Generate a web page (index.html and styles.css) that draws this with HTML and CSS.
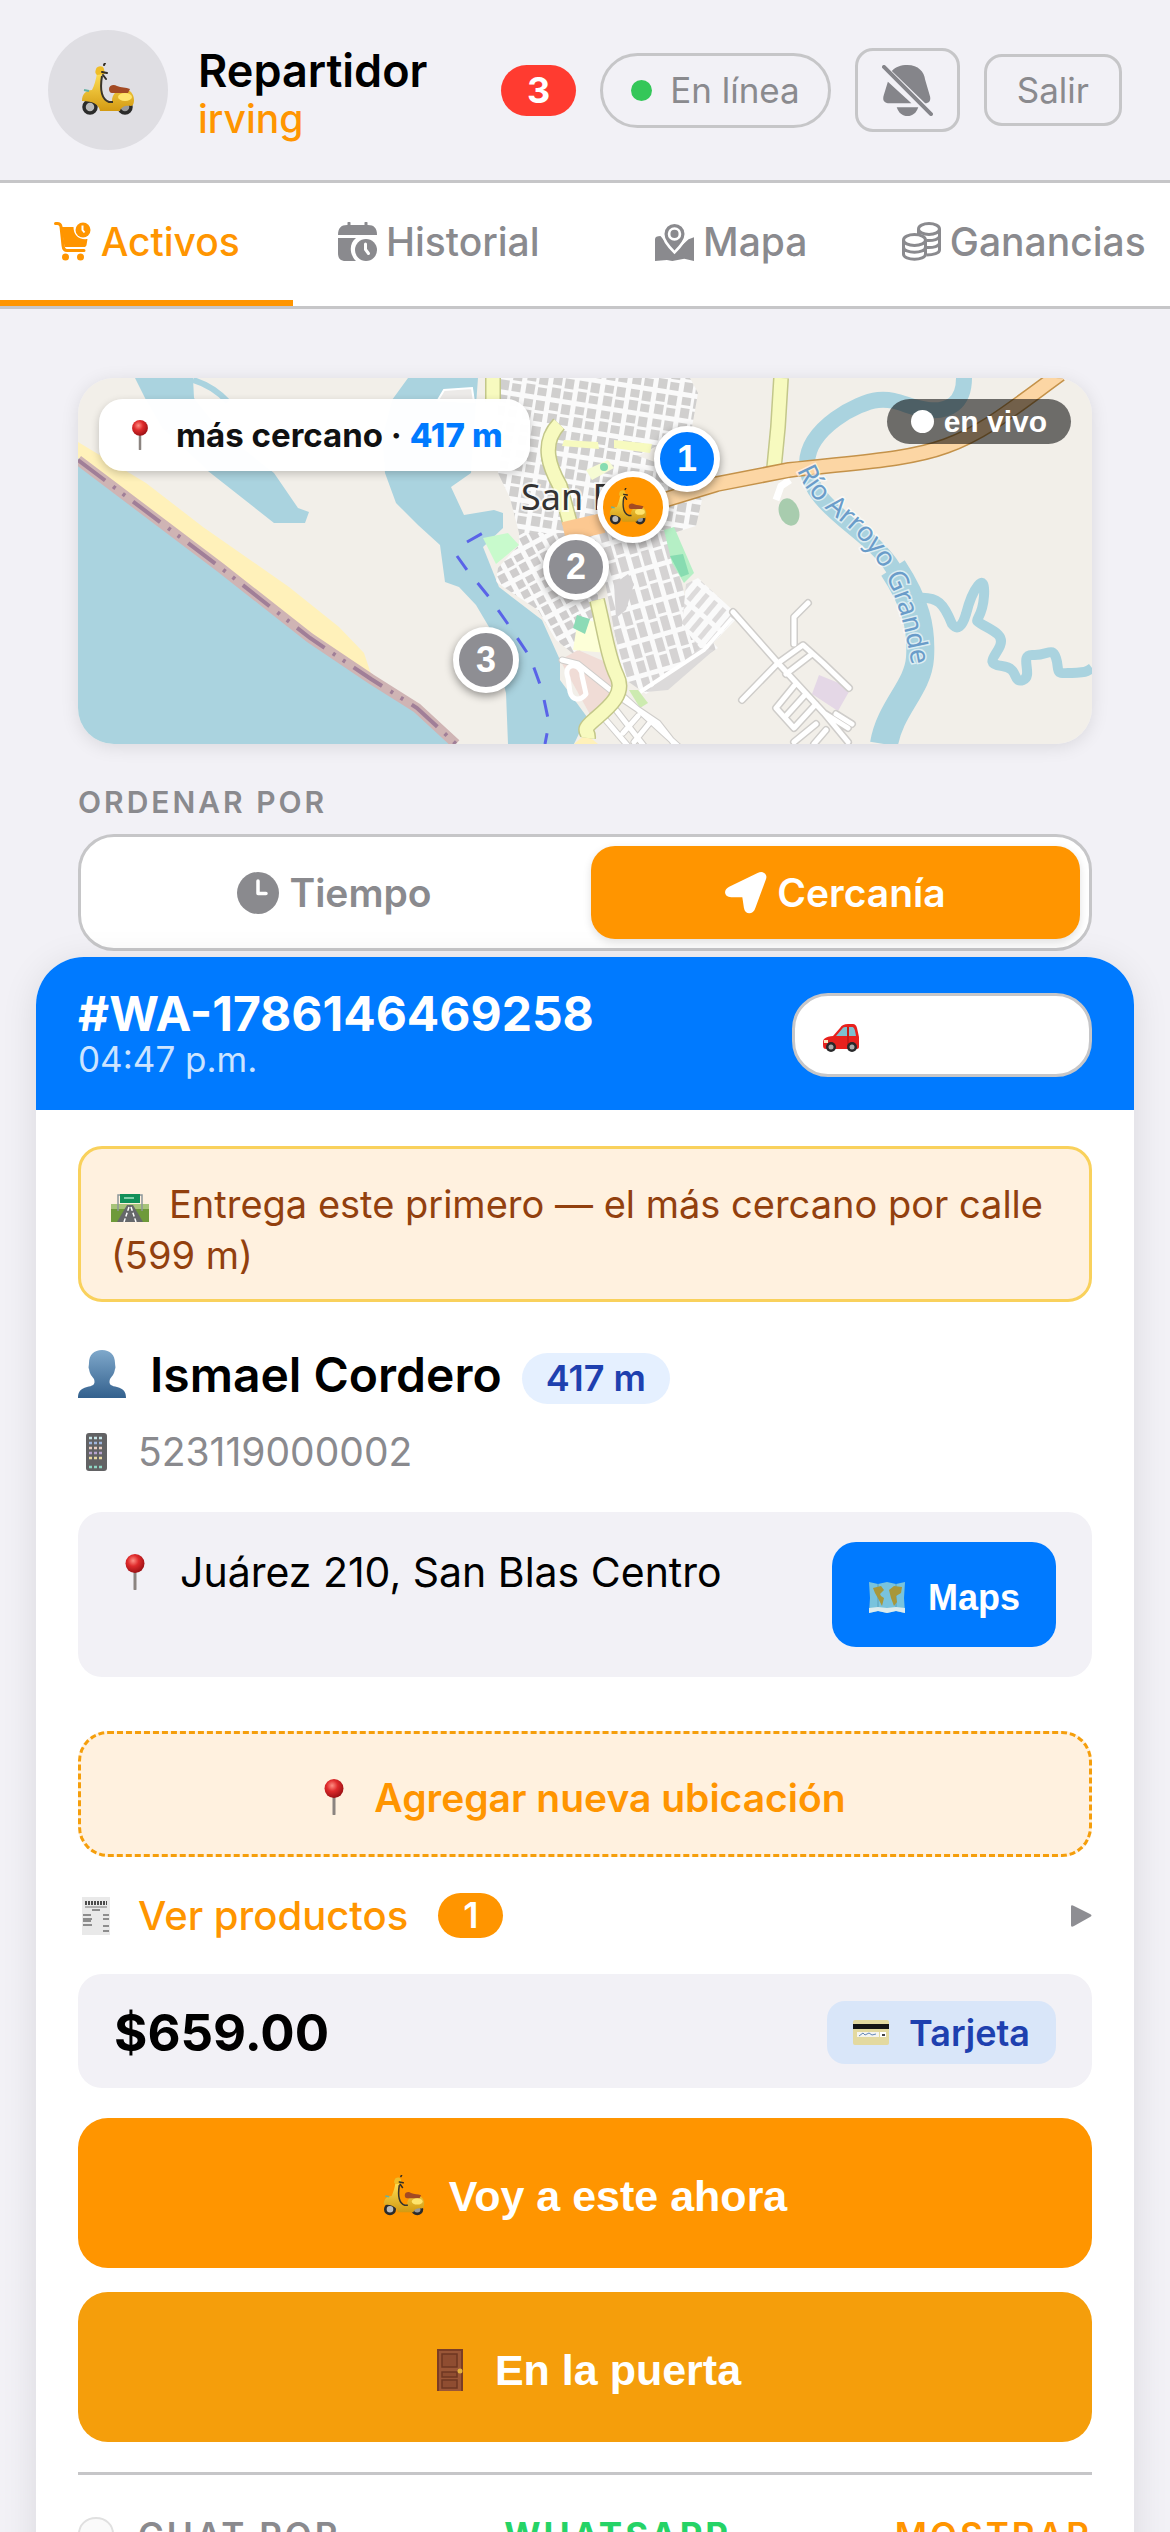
FILE: index.html
```
<!DOCTYPE html>
<html lang="es">
<head>
    <meta charset="UTF-8">
    <meta name="viewport" content="width=device-width, initial-scale=1.0">
    <title>Repartidor</title>
    <link rel="stylesheet" href="styles.css">
</head>
<body>
    <!-- shared icons -->
    <svg class="sprite" aria-hidden="true">
        <defs>
            <linearGradient id="gBody" x1="0" y1="0" x2="0" y2="1">
                <stop offset="0" stop-color="#ffdf55"/>
                <stop offset="1" stop-color="#d39a12"/>
            </linearGradient>
            <radialGradient id="gPin" cx=".4" cy=".35" r=".65">
                <stop offset="0" stop-color="#ff8f84"/>
                <stop offset=".45" stop-color="#df2b2c"/>
                <stop offset="1" stop-color="#9d1115"/>
            </radialGradient>
            <linearGradient id="gUser" x1="0" y1="0" x2="0" y2="1">
                <stop offset="0" stop-color="#7fa8cb"/>
                <stop offset="1" stop-color="#33608d"/>
            </linearGradient>
        </defs>
        <symbol id="scooter" viewBox="0 0 54 54">
            <circle cx="9" cy="44" r="6" fill="#bbb" stroke="#2b2b2b" stroke-width="3.500"/>
            <circle cx="44" cy="44" r="6" fill="#999" stroke="#2b2b2b" stroke-width="3.500"/>
            <path d="M1 38c0-7 4-11 10-11 2-4 4-10 5-17h5c-1 10 0 18 1 21 1 5 3 7 7 7h2c0-7 5-12 12-12 6 0 10 5 10 11 0 3-1 6-3 6-6-1-10 1-11 5H19c-1-6-6-10-18-10z" fill="url(#gBody)"/>
            <path d="M21 13c-2 12-1 23 7 26h4" fill="none" stroke="#39342c" stroke-width="2"/>
            <path d="M28 26c0-4 5-5 8-3 4 2 9 1 13 3l-2 4H31c-2 0-3-2-3-4z" fill="#a34a24"/>
            <path d="M15 6c1-3 7-4 8 0l1 5-8 1c-2-2-2-3-1-6z" fill="#f0bd28"/>
            <path d="M23 2l1-2m-3 9 5 1m-4 2 3 4" stroke="#332d24" stroke-width="2" stroke-linecap="round"/>
            <path d="M3 27l5 1" stroke="#62b1a5" stroke-width="2"/>
            <ellipse cx="44" cy="34" rx="7" ry="4" fill="#ffe46d"/>
        </symbol>
        <symbol id="pin" viewBox="0 0 20 36">
            <path d="M10 16v19" stroke="#8b8480" stroke-width="3" stroke-linecap="round"/>
            <circle cx="10" cy="9.5" r="9.5" fill="url(#gPin)"/>
        </symbol>
        <symbol id="cart" viewBox="0 0 36 39">
            <path d="M1 1.500h2c2 0 3 1 3.500 3l2 19c.3 3 2 5 4 5h17" fill="none" stroke="currentColor" stroke-width="3" stroke-linecap="round"/>
            <path d="M7 5h12c0 8 5 13 14 12l-1 6c-.4 1.500-1.200 2-2.500 2H10z" fill="currentColor"/>
            <circle cx="11" cy="35" r="3.500" fill="currentColor"/>
            <circle cx="26" cy="35" r="3.500" fill="currentColor"/>
            <circle cx="28.500" cy="8" r="7.500" fill="currentColor"/>
            <path d="M28 3.500v4.500l2 2.500" fill="none" stroke="#fff" stroke-width="2"/>
        </symbol>
        <symbol id="calendar" viewBox="0 0 39 39">
            <path d="M11 1v5M28 1v5" stroke="currentColor" stroke-width="3" stroke-linecap="round"/>
            <path d="M0 13c0-7 3-10 9-10h21c6 0 9 3 9 10zM0 16h18c-7 5-7 16 0 23H8c-6 0-8-3-8-8z" fill="currentColor"/>
            <circle cx="28" cy="28" r="11" fill="currentColor"/>
            <path d="M27.500 22v5.500l3 4" fill="none" stroke="#fff" stroke-width="3" stroke-linecap="round"/>
        </symbol>
        <symbol id="mappin" viewBox="0 0 36 36">
            <path d="M0 16c0-2 2-3 5-3l13 15 13-12 5-2v22l-9-2-11 2-5-1-11 1z" fill="currentColor"/>
            <path d="M18 28C11 21 7.500 16 7.500 11a10.500 10.500 0 0121 0c0 5-3.500 10-10.500 17z" fill="currentColor" stroke="#fff" stroke-width="2.500"/>
            <circle cx="18" cy="11" r="5" fill="none" stroke="#fff" stroke-width="2.500"/>
        </symbol>
        <symbol id="coins" viewBox="0 0 39 39">
            <g fill="none" stroke="currentColor" stroke-width="3">
                <ellipse cx="27" cy="7" rx="10.500" ry="5.500"/>
                <path d="M16.500 7v5M37.500 7v21c0 3-6 5-13 5M37.500 14c0 3-6 5-13 4.500M37.500 21c0 3-6 5-13 4.500"/>
                <ellipse cx="12.500" cy="18" rx="11" ry="5.500"/>
                <path d="M1.500 18v14c0 7 22 7 22 0V18M1.500 25c0 7 22 7 22 0"/>
            </g>
        </symbol>
        <symbol id="belloff" viewBox="0 0 52 52">
            <path d="M26 0c11 0 17 7 18 15l5 17c1 4-1 7-5 7L10 6c4-4 9-6 16-6zM6 17l24 22H8c-6 0-8-3-6-9zM15 43h22c-2 6-6 9-11 9s-9-3-11-9z" fill="currentColor"/>
            <path d="M2 2l48 48" stroke="currentColor" stroke-width="4" stroke-linecap="round"/>
        </symbol>
        <symbol id="clock" viewBox="0 0 42 42">
            <circle cx="21" cy="21" r="21" fill="currentColor"/>
            <path d="M21 9v12.500h8" fill="none" stroke="#fff" stroke-width="3.500" stroke-linecap="round" stroke-linejoin="round"/>
        </symbol>
        <symbol id="arrow" viewBox="0 0 40 40">
            <path d="M31 1c5-2.500 10 .5 8 6L29 34c-2 7-10 7-11 0l-1.500-10H6c-7 0-8-7-2-10z" fill="currentColor"/>
        </symbol>
    </svg>

    <header class="header">
        <div class="avatar"><svg><use href="#scooter"/></svg></div>
        <div class="who">
            <h1>Repartidor</h1>
            <p>irving</p>
        </div>
        <div class="actions">
            <span class="count">3</span>
            <button class="online"><i class="dot"></i>En línea</button>
            <button class="bell" aria-label="Notificaciones"><svg><use href="#belloff"/></svg></button>
            <button class="exit">Salir</button>
        </div>
    </header>

    <nav class="tabs">
        <a href="#" class="tab active"><svg><use href="#cart"/></svg>Activos</a>
        <a href="#" class="tab"><svg><use href="#calendar"/></svg>Historial</a>
        <a href="#" class="tab"><svg><use href="#mappin"/></svg>Mapa</a>
        <a href="#" class="tab"><svg><use href="#coins"/></svg>Ganancias</a>
    </nav>

    <section class="top">
        <div class="map">
            <svg class="tiles" viewBox="0 0 1014 366" preserveAspectRatio="xMidYMid slice">
                <defs>
                    <pattern id="blocksN" width="26" height="26" patternUnits="userSpaceOnUse" patternTransform="rotate(9)">
                        <rect width="26" height="26" fill="#fafafa"/>
                        <path d="M2 2h9v8H2zM14 2h9v10h-9zM2 13h9v10H2zM14 15h9v8h-9z" fill="#d0cfce"/>
                    </pattern>
                    <pattern id="blocksS" width="24" height="34" patternUnits="userSpaceOnUse" patternTransform="rotate(-16)">
                        <rect width="24" height="34" fill="#fafafa"/>
                        <path d="M2 2h8v14H2zM13 2h8v11h-8zM2 19h8v12H2zM13 16h8v15h-8z" fill="#d5d3d3"/>
                    </pattern>
                    <pattern id="blocksW" width="24" height="24" patternUnits="userSpaceOnUse" patternTransform="rotate(-28)">
                        <rect width="24" height="24" fill="#fafafa"/>
                        <path d="M2 2h8v8H2zM13 2h8v7h-8zM2 13h8v8H2zM13 12h8v9h-8z" fill="#cfcdcd"/>
                    </pattern>
                    <pattern id="blocksE" width="11" height="22" patternUnits="userSpaceOnUse" patternTransform="rotate(40)">
                        <rect width="11" height="22" fill="#fafafa"/>
                        <rect x="3" y="3" width="5" height="17" fill="#dddbdb"/>
                    </pattern>
                </defs>
                <rect width="1014" height="366" fill="#f2efe9"/>
                <!-- sea and beach -->
                <path d="M0 80 143 190 232 260 293 301 339 330 378 366H0z" fill="#aad3df"/>
                <path d="M0 64 68 105 125 149 211 209 261 249 286 275 293 296 232 258 143 188 0 80z" fill="#fff1ba"/>
                <path d="M0 82 143 190 232 260 293 301 339 330 378 366" fill="none" stroke="#cfb4b4" stroke-width="10"/>
                <path d="M0 82 143 190 232 260 293 301 339 330 378 366" fill="none" stroke="#a07f98" stroke-width="4" stroke-dasharray="34 10 3 9 3 10"/>
                <!-- lagoon and estuary -->
                <path d="M57 0 68 22 84 50 130 93 196 145H227L231 134 220 130 196 95 140 50 116 20 115 0z" fill="#aad3df"/>
                <path d="M115 2Q135 8 150 24" fill="none" stroke="#aad3df" stroke-width="6"/>
                <path d="M330 0 314 22 304 60 307 95 318 125 340 147 362 167 367 204 381 209 398 227 411 249 428 315 430 366H496L509 339 482 302V282L464 242 421 209 405 169 425 150V135L416 132 386 137 373 109 393 95 400 0z" fill="#aad3df"/>
                <path d="M360 22 366 12 394 10 396 24z" fill="#eceae8" stroke="#fff" stroke-width="2"/>
                <!-- town -->
                <path d="M420 0H612L620 15 614 49 560 78 600 92 624 122 618 148 595 155H441L432 120 420 95z" fill="url(#blocksN)"/>
                <path d="M441 155H520V250L498 278 478 262 460 232 418 204 420 190 441 167z" fill="url(#blocksW)"/>
                <path d="M517 150 586 152 604 206 612 240 640 270 568 316 545 300z" fill="url(#blocksS)"/>
                <path d="M608 206 620 200 661 238 626 275 604 248z" fill="url(#blocksE)"/>
                <path d="M568 314 622 270 636 272 590 312z" fill="#dcdada"/>
                <path d="M562 314 626 272 654 240" fill="none" stroke="#fff" stroke-width="4"/>
                <path d="M482 282 500 272 530 285 540 315 515 342z" fill="#f0dcd6"/>
                <path d="M500 240 522 245 530 275 495 272z" fill="#fdffd8"/>
                <path d="M499 237 512 241 507 256 495 250z" fill="#8cdbb6"/>
                <path d="M405 160 430 155 441 167 418 186z" fill="#c8facc"/>
                <path d="M586 152 596 149 616 195 606 205 594 185z" fill="#b5efc5"/>
                <path d="M592 178 605 176 611 196 603 199z" fill="#87dcb1"/>
                <path d="M536 62 574 66 572 75 536 70zM486 62 520 64 521 71 484 68z" fill="#f7fabf"/>
                <path d="M508 92 530 82 536 90 514 102z" fill="#f6fbd4"/>
                <circle cx="526" cy="89" r="4" fill="#87dcb1"/>
                <path d="M536 206 550 196 556 206 548 232 538 240z" fill="#d5d3d4"/>
                <ellipse cx="711" cy="134" rx="10" ry="14" fill="#a8ccae" transform="rotate(-18 711 134)"/>
                <path d="M698 122 703 108 712 102" fill="none" stroke="#fff" stroke-width="7"/>
                <path d="M741 297 773 310 760 333 734 316z" fill="#e4d7e6"/>
                <path d="M551 312 560 312 570 325 562 330z" fill="#cdebb0"/>
                <path d="M496 366 508 356 520 366z" fill="#fff1ba"/>
                <!-- outskirts -->
                <g fill="none" stroke-linejoin="round" stroke-linecap="round">
                    <path d="M655 234 700 285 746 335 770 364M700 285 664 322M700 285 725 267 745 285 771 310M716 266V239L730 225M708 296 734 276M716 308 698 330 716 350 738 326M726 318 708 338M738 346 716 364M748 352 736 366M746 335 770 350M758 336 774 346" stroke="#cfcdca" stroke-width="8"/>
                    <path d="M655 234 700 285 746 335 770 364M700 285 664 322M700 285 725 267 745 285 771 310M716 266V239L730 225M708 296 734 276M716 308 698 330 716 350 738 326M726 318 708 338M738 346 716 364M748 352 736 366M746 335 770 350M758 336 774 346" stroke="#fff" stroke-width="5"/>
                    <path d="M484 282 500 286 540 318 580 345 598 368M545 318 600 368M526 340 550 368M538 332 566 368M545 355 560 338M556 364 574 342" stroke="#cfcdca" stroke-width="7"/>
                    <path d="M484 282 500 286 540 318 580 345 598 368M545 318 600 368M526 340 550 368M538 332 566 368M545 355 560 338M556 364 574 342" stroke="#fff" stroke-width="5"/>
                    <path d="M490 300C484 284 504 284 504 298L508 316C502 324 494 322 492 314z" stroke="#fff" stroke-width="5"/>
                </g>
                <!-- rivers -->
                <g fill="none" stroke="#aad3df" stroke-linejoin="round">
                    <path d="M886 0C886 26 870 34 850 32S820 20 800 22 730 50 729 85C730 130 790 150 815 190S846 250 846 275" stroke-width="16"/>
                    <path d="M815 190C838 225 844 250 842 280S812 330 806 366" stroke-width="28"/>
                    <path d="M839 220C860 218 866 226 874 246Q882 256 888 236C894 212 908 190 906 218S892 240 905 247 926 258 922 268 906 286 924 288 934 306 945 302 940 276 955 277 974 268 978 280 976 296 990 295 1006 296 1014 290" stroke-width="10"/>
                </g>
                <!-- main roads -->
                <g fill="none">
                    <path d="M415 0V24M481 46C462 66 472 90 482 108L492 145M519 222C526 250 530 280 539 298S530 330 516 342 511 352 510 360M703 0 700 49 696 90" stroke="#c3c78a" stroke-width="16"/>
                    <path d="M415 0V24M481 46C462 66 472 90 482 108L492 145M519 222C526 250 530 280 539 298S530 330 516 342 511 352 510 360M703 0 700 49 696 90" stroke="#f7fabf" stroke-width="13"/>
                    <path d="M486 154 525 145" stroke="#fcc891" stroke-width="20"/>
                    <path d="M560 130 639 106 711 92C780 84 830 82 868 68S930 34 982-4" stroke="#c4924a" stroke-width="16"/>
                    <path d="M560 130 639 106 711 92C780 84 830 82 868 68S930 34 982-4" stroke="#fcd6a4" stroke-width="13"/>
                </g>
                <!-- ferry -->
                <path d="M389 164 405 155M379 178 389 192 411 219 432 249 452 279 464 312 471 345 467 366" fill="none" stroke="#5a63e8" stroke-width="3" stroke-dasharray="17 17"/>
                <path id="rio" d="M719 92C732 128 764 138 788 168S826 230 838 315" fill="none"/>
                <text class="town" x="443" y="132">San Blas</text>
                <text class="river"><textPath href="#rio">Río Arroyo Grande</textPath></text>
            </svg>
            <div class="near"><svg><use href="#pin"/></svg><span>más cercano · <b>417 m</b></span></div>
            <div class="live"><i></i>en vivo</div>
            <span class="stop first" style="left: 60.06%; top: 22.13%">1</span>
            <span class="stop" style="left: 49.11%; top: 51.64%">2</span>
            <span class="stop" style="left: 40.24%; top: 77.05%">3</span>
            <span class="stop me" style="left: 54.73%; top: 35.25%"><svg><use href="#scooter"/></svg></span>
        </div>

        <h2 class="label">ORDENAR POR</h2>
        <div class="sort">
            <button><svg><use href="#clock"/></svg>Tiempo</button>
            <button class="on"><svg><use href="#arrow"/></svg>Cercanía</button>
        </div>
    </section>

    <article class="card">
        <div class="card-head">
            <div>
                <h2>#WA-1786146469258</h2>
                <time>04:47 p.m.</time>
            </div>
            <span class="status">
                <svg viewBox="0 0 36 28">
                    <path d="M1 15c2-2 6-3 9-3l7-8c2-3 4-4 8-4h5c2 0 3 1 4 4l2 9v10c0 1-1 2-2 2H3c-2 0-3-1-3-4 0-3 0-5 1-6z" fill="#e8211d"/>
                    <path d="M13 12l6-7c1-2 3-2 5-2v9zM26 3h3c2 0 3 2 4 9h-7z" fill="#7ec0cf"/>
                    <path d="M25 3v19" stroke="#a81613" stroke-width="1"/>
                    <circle cx="8" cy="23" r="5" fill="#28282a"/><circle cx="8" cy="23" r="2.500" fill="#aaa"/>
                    <circle cx="29" cy="23" r="5" fill="#28282a"/><circle cx="29" cy="23" r="2.500" fill="#aaa"/>
                    <path d="M1 16h4v3H1z" fill="#ffe7bd"/>
                </svg>
            </span>
        </div>
        <div class="card-body">
            <p class="tip"><svg viewBox="0 0 38 28">
                    <path d="M0 10h38v18H0z" fill="#6e9a3a"/>
                    <path d="M0 10h38v5H0z" fill="#a8c47a"/>
                    <path d="M16 11h6l10 17H6z" fill="#66686b"/>
                    <path d="M18 13l-5 15M20 13l5 15" stroke="#fff" stroke-width="1.500" stroke-dasharray="4 2"/>
                    <path d="M7 17V1h24v16" fill="none" stroke="#8d979b" stroke-width="1.500"/>
                    <path d="M9 0h20v9H9z" fill="#129059"/>
                    <path d="M13 4h10" stroke="#7fd0a9" stroke-width="2"/>
                </svg>Entrega este primero — el más cercano por calle (599 m)</p>

            <div class="client">
                <svg viewBox="0 0 48 48">
                    <path d="M24 0c8 0 13 5 13 13 0 2 1 5 0 6-1 6-3 7-5 10-2 6 2 7 7 8 7 2 9 5 9 11H0c0-6 2-9 9-11 5-1 9-2 7-8-2-3-4-4-5-10-1-1 0-4 0-6C11 5 16 0 24 0z" fill="url(#gUser)"/>
                </svg>
                <h3>Ismael Cordero</h3>
                <span class="dist">417 m</span>
            </div>

            <p class="phone"><svg viewBox="0 0 36 38">
                    <rect x="8" y="0" width="21" height="38" rx="3" fill="#626264"/>
                    <g stroke-width="2.500" stroke-dasharray="3 2" fill="none">
                        <path d="M11 5h15" stroke="#c8e6e9"/><path d="M11 10h15" stroke="#9fb6dd"/>
                        <path d="M11 15h15" stroke="#e9cfc3"/><path d="M11 20h15" stroke="#b7a4cf"/>
                        <path d="M11 25h15" stroke="#e9d9a2"/><path d="M11 34h15" stroke="#8ed6c3"/>
                    </g>
                </svg>523119000002</p>

            <div class="address">
                <p><svg><use href="#pin"/></svg>Juárez 210, San Blas Centro</p>
                <button class="maps"><svg viewBox="0 0 38 34">
                        <path d="M1 1l9 2 9-2 9 2 9-2-1 16 1 15-9-2-9 2-9-2-9 2 1-15z" fill="#79c3dd"/>
                        <path d="M10 3v27M28 3v27" stroke="#5aa0bd" stroke-width="1"/>
                        <path d="M5 7l8-2 3 4-4 4 1 2 3 2-2 8-3-6-4-7zM21 9l5-4 8 1-1 6-5 3 1 6-3 4-3-8z" fill="#a8973a"/>
                        <path d="M1 27l9-1 9 1 9-1 9 1v5l-9-2-9 2-9-2-9 2z" fill="#dcebee"/>
                    </svg>Maps</button>
            </div>

            <button class="add"><svg><use href="#pin"/></svg>Agregar nueva ubicación</button>

            <button class="products">
                <svg viewBox="0 0 36 38">
                    <path d="M4 0h28v38H4z" fill="#e9e9e9"/>
                    <path d="M7 6h22" stroke="#4b4b4b" stroke-width="4" stroke-dasharray="2 1"/>
                    <path d="M7 10h22" stroke="#777" stroke-width="1"/>
                    <path d="M14 13h8M5 18h8M25 18h6M5 22h9M25 22h6M5 24h8M5 28h9M25 29h6M25 34h6" stroke="#6f6f6f" stroke-width="1.500"/>
                </svg>
                Ver productos
                <span class="qty">1</span>
                <svg class="tri" viewBox="0 0 22 22"><path d="M1 2c0-2 1-2 3-1l16 8c2 1 2 2 0 3L4 21c-2 1-3 1-3-1z" fill="#8e8e93"/></svg>
            </button>

            <div class="total">
                <strong>$659.00</strong>
                <span class="pay"><svg viewBox="0 0 36 25">
                        <rect width="36" height="25" rx="2" fill="#e3d9a0"/>
                        <path d="M0 4h36v5H0z" fill="#151515"/>
                        <path d="M4 12h22v5H4z" fill="#f4f4f0"/>
                        <path d="M6 16l4-3 2 2 4-2 3 2 4-1" stroke="#6487b8" stroke-width="1" fill="none"/>
                        <path d="M27 12h6v5h-6z" fill="#fff"/>
                        <path d="M29 15h3" stroke="#444" stroke-width="2"/>
                    </svg>Tarjeta</span>
            </div>

            <button class="go"><svg><use href="#scooter"/></svg>Voy a este ahora</button>
            <button class="go door"><svg viewBox="0 0 42 42">
                    <path d="M8 0h26v42H8z" fill="#7a3d26"/>
                    <path d="M10 2h22v40H10z" fill="#9a5637"/>
                    <path d="M13 5h15v13H13zM13 23h15v5H13zM13 31h15v8H13z" fill="#8f4d31" stroke="#6f3722" stroke-width="1.500"/>
                    <circle cx="31" cy="22" r="2.500" fill="#e3b23c"/>
                </svg>En la puerta</button>

            <div class="chat">
                <span class="chat-label"><svg viewBox="0 0 36 36"><path d="M18 1c10 0 17 7 17 16s-7 16-17 16c-3 0-6-1-8-2l-6 4 1-8C2 24 1 21 1 17 1 8 8 1 18 1z" fill="#fafafa" stroke="#e0e0e0" stroke-width="2"/></svg>CHAT POR</span>
                <a href="#" class="wa">WHATSAPP</a>
                <button class="show">MOSTRAR</button>
            </div>
        </div>
    </article>
</body>
</html>
```
FILE: styles.css
```
*{
    box-sizing: border-box;
}
body{
    margin: 0;
    background: #f2f1f6;
    color: #000;
    font-family: Inter, "Liberation Sans", sans-serif;
    font-size: 39px;
}
h1, h2, h3, p{
    margin: 0;
}
button{
    margin: 0;
    padding: 0;
    border: none;
    background: none;
    color: inherit;
    font: inherit;
}
a{
    text-decoration: none;
    color: inherit;
}
svg{
    display: block;
    flex: none;
}
.sprite{
    position: absolute;
    width: 0;
    height: 0;
}

/* header */
.header{
    display: flex;
    align-items: center;
    padding: 30px 48px;
    border-bottom: 3px solid #c6c6c8;
}
.avatar{
    width: 120px;
    height: 120px;
    border-radius: 50%;
    background: #dfdee3;
    display: flex;
    align-items: center;
    justify-content: center;
}
.avatar svg{
    width: 54px;
    height: 54px;
}
.who{
    margin-left: 30px;
    padding-top: 9px;
}
.who h1{
    font-size: 45px;
    font-weight: 600;
    line-height: 48px;
}
.who p{
    font-size: 39px;
    font-weight: 500;
    line-height: 48px;
    color: #ff9500;
}
.actions{
    margin-left: auto;
    display: flex;
    align-items: center;
    gap: 24px;
    color: #8a8a8e;
    font-size: 35px;
}
.count{
    padding: 0 26px;
    border-radius: 26px;
    background: #ff3b30;
    color: #fff;
    font-size: 36px;
    font-weight: 700;
    line-height: 51px;
}
.online, .bell, .exit{
    display: flex;
    align-items: center;
    justify-content: center;
    border: 3px solid #c6c6c8;
    border-radius: 18px;
    height: 72px;
    padding: 0 30px;
}
.online{
    height: 75px;
    padding: 0 28px;
    border-radius: 38px;
    gap: 18px;
}
.dot{
    width: 21px;
    height: 21px;
    border-radius: 50%;
    background: #34c759;
}
.bell{
    height: 84px;
    padding: 0 24px;
    color: #85858a;
}
.bell svg{
    width: 51px;
    height: 51px;
}

/* tabs */
.tabs{
    display: grid;
    grid-template-columns: repeat(4, 1fr);
    background: #fff;
    border-bottom: 3px solid #c6c6c8;
}
.tab{
    display: flex;
    align-items: center;
    justify-content: center;
    gap: 9px;
    height: 123px;
    border-bottom: 6px solid transparent;
    color: #8a8a8e;
    font-size: 39px;
    font-weight: 500;
}
.tab svg{
    width: 39px;
    height: 39px;
}
.tab.active{
    color: #ff9500;
    border-bottom-color: #ff9500;
}

/* map */
.top{
    padding: 69px 78px 6px;
}
.map{
    position: relative;
    height: 366px;
    border-radius: 36px;
    overflow: hidden;
    box-shadow: 0 3px 18px rgba(0,0,0,0.1);
    font-family: "Liberation Sans", sans-serif;
}
.tiles{
    width: 100%;
    height: 100%;
}
.town{
    font: 36px "Noto Sans", sans-serif;
    fill: #333;
    stroke: rgba(255,255,255,0.7);
    stroke-width: 4px;
    paint-order: stroke;
}
.river{
    font: 27px "Noto Sans", sans-serif;
    fill: #6a9cc9;
    stroke: rgba(255,255,255,0.6);
    stroke-width: 3px;
    paint-order: stroke;
}
.near{
    position: absolute;
    left: 21px;
    top: 21px;
    display: flex;
    align-items: center;
    gap: 27px;
    height: 72px;
    padding: 0 27px 0 32px;
    border-radius: 24px;
    background: rgba(255,255,255,0.98);
    box-shadow: 0 3px 9px rgba(0,0,0,0.2);
    color: #111;
    font-family: Inter, sans-serif;
    font-size: 33px;
    font-weight: 700;
}
.near svg{
    width: 18px;
    height: 30px;
}
.near b{
    color: #007aff;
    font-weight: 800;
}
.live{
    position: absolute;
    right: 21px;
    top: 21px;
    display: flex;
    align-items: center;
    gap: 10px;
    height: 45px;
    padding: 0 24px;
    border-radius: 23px;
    background: rgba(0,0,0,0.55);
    color: #fff;
    font-size: 30px;
    font-weight: 700;
}
.live i{
    width: 23px;
    height: 23px;
    border-radius: 50%;
    background: #fff;
}
.stop{
    position: absolute;
    width: 66px;
    height: 66px;
    margin: -33px 0 0 -33px;
    border: 6px solid #fff;
    border-radius: 50%;
    background: #8e8e93;
    box-shadow: 0 3px 9px rgba(0,0,0,0.4);
    color: #fff;
    font-size: 36px;
    font-weight: 700;
    line-height: 54px;
    text-align: center;
}
.stop.first{
    background: #007aff;
}
.stop.me{
    width: 72px;
    height: 72px;
    margin: -36px 0 0 -36px;
    background: #ff9500;
    display: flex;
    align-items: center;
    padding-left: 6px;
}
.stop.me svg{
    width: 38px;
    height: 38px;
}

/* sort */
.label{
    margin: 40px 0 14px;
    color: #8a8a8e;
    font-size: 30px;
    font-weight: 600;
    line-height: 36px;
    letter-spacing: 3px;
}
.sort{
    display: grid;
    grid-template-columns: 1fr 1fr;
    gap: 12px;
    padding: 9px;
    border: 3px solid #c6c6c8;
    border-radius: 36px;
    background: #fff;
}
.sort button{
    display: flex;
    align-items: center;
    justify-content: center;
    gap: 10px;
    height: 93px;
    border-radius: 24px;
    color: #8a8a8e;
    font-size: 39px;
    font-weight: 600;
}
.sort .on{
    background: #ff9500;
    color: #fff;
    box-shadow: 0 3px 9px rgba(0,0,0,0.12);
}
.sort svg{
    width: 42px;
    height: 42px;
}

/* order card */
.card{
    margin: 0 36px;
    border-radius: 48px;
    overflow: hidden;
    background: #fff;
    box-shadow: 0 6px 36px rgba(0,0,0,0.1);
}
.card-head{
    display: flex;
    align-items: center;
    justify-content: space-between;
    padding: 33px 42px 30px;
    background: #007aff;
    color: #fff;
}
.card-head h2{
    font-size: 48px;
    font-weight: 700;
    line-height: 48px;
}
.card-head time{
    display: block;
    font-size: 35px;
    line-height: 42px;
    color: #cce4ff;
}
.status{
    display: flex;
    align-items: center;
    width: 300px;
    height: 84px;
    padding: 6px 28px 0;
    border: 3px solid #c6c6c8;
    border-radius: 36px;
    background: #fff;
}
.status svg{
    width: 36px;
    height: 28px;
}
.card-body{
    padding: 36px 42px;
}
.tip{
    padding: 30px 30px 18px;
    border: 3px solid #f9d15c;
    border-radius: 24px;
    background: #fff1df;
    color: #92400e;
    font-size: 38px;
    line-height: 51px;
}
.tip svg{
    display: inline-block;
    width: 38px;
    height: 28px;
    margin-right: 20px;
    vertical-align: -4px;
}
.client{
    display: flex;
    align-items: center;
    height: 60px;
    margin-top: 42px;
}
.client svg{
    width: 48px;
    height: 48px;
}
.client h3{
    margin: 0 20px 0 24px;
    font-size: 48px;
    font-weight: 600;
}
.dist{
    margin-top: 8px;
    padding: 0 24px;
    border-radius: 26px;
    background: #e5f0ff;
    color: #1e40af;
    font-size: 36px;
    font-weight: 600;
    line-height: 51px;
}
.phone{
    display: flex;
    align-items: center;
    gap: 24px;
    margin-top: 24px;
    color: #8a8a8e;
    font-size: 39px;
    line-height: 48px;
}
.phone svg{
    width: 36px;
    height: 38px;
}
.address{
    display: flex;
    align-items: flex-start;
    justify-content: space-between;
    margin-top: 36px;
    padding: 30px 36px;
    border-radius: 24px;
    background: #f2f1f6;
}
.address p{
    display: flex;
    align-items: center;
    gap: 35px;
    padding-left: 11px;
    font-size: 41px;
    line-height: 60px;
}
.address p svg, .add svg{
    width: 20px;
    height: 36px;
}
.maps{
    display: flex;
    align-items: center;
    gap: 22px;
    height: 105px;
    padding: 6px 36px 0;
    border-radius: 24px;
    background: #007aff;
    color: #fff;
    font: bold 36px "Liberation Sans", sans-serif;
}
.maps svg{
    width: 38px;
    height: 34px;
}
.add{
    display: flex;
    align-items: center;
    justify-content: center;
    gap: 30px;
    width: 100%;
    height: 126px;
    margin-top: 54px;
    padding-top: 6px;
    border: 3px dashed #f59e0b;
    border-radius: 30px;
    background: #fff1df;
    color: #ff9500;
    font-size: 39px;
    font-weight: 600;
}
.products{
    display: flex;
    align-items: center;
    width: 100%;
    height: 57px;
    margin: 30px 0;
    gap: 24px;
    color: #ff9500;
    font-size: 40px;
    font-weight: 500;
}
.products svg{
    width: 36px;
    height: 38px;
}
.products .tri{
    width: 22px;
    height: 22px;
    margin-left: auto;
}
.qty{
    margin-left: 6px;
    padding: 0 25px;
    border-radius: 23px;
    background: #ff9500;
    color: #fff;
    font-size: 36px;
    font-weight: 600;
    line-height: 45px;
}
.total{
    display: flex;
    align-items: center;
    justify-content: space-between;
    padding: 27px 36px 24px;
    border-radius: 24px;
    background: #f2f1f6;
}
.total strong{
    font-size: 51px;
    font-weight: 700;
    line-height: 60px;
}
.pay{
    display: flex;
    align-items: center;
    gap: 20px;
    height: 63px;
    padding: 0 26px;
    border-radius: 18px;
    background: #d9e6f9;
    color: #1e40af;
    font-size: 36px;
    font-weight: 600;
}
.pay svg{
    width: 36px;
    height: 25px;
}
.go{
    display: flex;
    align-items: center;
    justify-content: center;
    gap: 24px;
    width: 100%;
    height: 150px;
    margin-top: 30px;
    padding-top: 6px;
    border-radius: 30px;
    background: #ff9500;
    color: #fff;
    font: bold 43px "Liberation Sans", sans-serif;
}
.go svg{
    width: 42px;
    height: 42px;
}
.go.door{
    margin-top: 24px;
    background: #f59e0b;
}
.chat{
    display: flex;
    align-items: center;
    justify-content: space-between;
    margin-top: 30px;
    padding-top: 36px;
    border-top: 3px solid #c6c6c8;
    color: #8a8a8e;
    font-size: 35px;
    font-weight: 600;
    line-height: 48px;
    letter-spacing: 3px;
}
.chat-label{
    display: flex;
    align-items: center;
    gap: 24px;
}
.chat svg{
    width: 36px;
    height: 36px;
}
.wa{
    color: #25d366;
    font-weight: 700;
}
.show{
    color: #ff9500;
    letter-spacing: 3px;
}
```
